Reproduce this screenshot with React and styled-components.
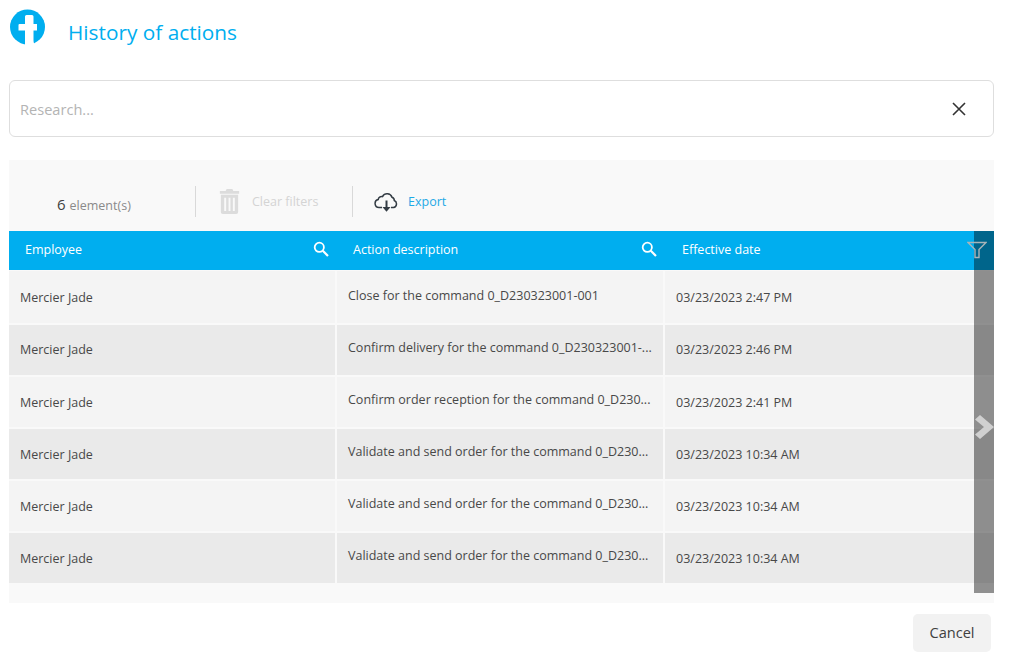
import React from "react";
import styled, { createGlobalStyle } from "styled-components";

const Global = createGlobalStyle`
  html, body { margin: 0; padding: 0; background: #fff; }
  body { font-family: "Open Sans", "Liberation Sans", sans-serif; color: #404040; }
`;

const Page = styled.div`
  width: 1013px;
  height: 658px;
  overflow: hidden;
  padding: 0 19px 0 9px;
  box-sizing: border-box;
`;
const Title = styled.header`
  height: 80px;
  display: flex;
  align-items: flex-start;
`;
const Logo = styled.svg`
  width: 36px;
  height: 36px;
  margin: 9px 0 0 1px;
  flex: none;
`;
const TitleText = styled.h1`
  margin: 18px 0 0 22px;
  font-size: 20.8px;
  line-height: 28px;
  font-weight: 400;
  color: #00aeef;
`;
const SearchBox = styled.div`
  height: 57px;
  box-sizing: border-box;
  border: 1px solid #dedede;
  border-radius: 6px;
  display: flex;
  align-items: center;
  justify-content: space-between;
  padding: 0 27px 0 10px;
  font-size: 14.6px;
  color: #b4b4b4;
`;
const Panel = styled.section`
  position: relative;
  margin-top: 23px;
  height: 443px;
  background: #f9f9f9;
`;
const Toolbar = styled.div`
  height: 71px;
  display: flex;
  align-items: flex-start;
`;
const Count = styled.div`
  width: 186px;
  box-sizing: border-box;
  padding: 34px 0 0 48px;
  font-size: 12.5px;
  line-height: 20px;
  color: #8a8a8a;
  span { font-size: 15px; color: #404040; margin-right: 4px; }
`;
const ToolAction = styled.div`
  margin-top: 26px;
  height: 31px;
  box-sizing: border-box;
  border-left: 1px solid #d9d9d9;
  display: flex;
  align-items: flex-start;
  width: ${p => p.$width}px;
  padding-left: ${p => p.$pad}px;
  gap: ${p => p.$gap}px;
  font-size: 12.5px;
  line-height: 18px;
  color: ${p => (p.$off ? "#d4d4d4" : "#1fa9e6")};
`;
const ToolIcon = styled.svg`
  margin-top: ${p => p.$top}px;
  flex: none;
`;
const ActionLabel = styled.span`
  margin-top: 7px;
`;
const Head = styled.div`
  height: 39px;
  background: #00aeef;
  display: grid;
  grid-template-columns: 328px 328px 1fr;
  color: #fff;
  font-size: 12.5px;
`;
const HeadCell = styled.div`
  display: flex;
  align-items: center;
  justify-content: space-between;
  padding: 0 ${p => p.$right}px 3px ${p => p.$left}px;
`;
const Rows = styled.div`
  padding-top: 1px;
  display: flex;
  flex-direction: column;
  gap: 2px;
`;
const Row = styled.div`
  height: ${p => (p.$first ? 52 : 50)}px;
  display: grid;
  grid-template-columns: 326px 326px 1fr;
  gap: 2px;
  font-size: 12.5px;
  color: #484848;
`;
const Cell = styled.div`
  background: ${p => (p.$even ? "#eaeaea" : "#f4f4f4")};
  padding: 0 11px ${p => p.$lift}px;
  display: flex;
  align-items: center;
  white-space: nowrap;
  box-sizing: border-box;
`;
const Overlay = styled.div`
  position: absolute;
  top: 71px;
  right: 0;
  width: 20px;
  height: 362px;
  padding-top: 30px;
  box-sizing: border-box;
  background: rgba(0, 0, 0, 0.42);
  display: flex;
  align-items: center;
  justify-content: flex-end;
`;
const Filter = styled.svg`
  position: absolute;
  top: 241px;
  left: 967px;
  width: 20px;
  height: 18px;
`;
const Footer = styled.footer`
  display: flex;
  justify-content: flex-end;
  padding: 11px 3px 0 0;
`;
const CancelButton = styled.button`
  width: 78px;
  height: 38px;
  padding: 0 0 2px;
  border: 0;
  border-radius: 5px;
  background: #f2f2f2;
  font: 400 14.6px "Open Sans", sans-serif;
  color: #404040;
`;

const rows = [
  { action: "Close for the command 0_D230323001-001", date: "03/23/2023 2:47 PM", side: 0, mid: 3 },
  { action: "Confirm delivery for the command 0_D230323001-...", date: "03/23/2023 2:46 PM", side: 2, mid: 5 },
  { action: "Confirm order reception for the command 0_D230...", date: "03/23/2023 2:41 PM", side: 0, mid: 5 },
  { action: "Validate and send order for the command 0_D230...", date: "03/23/2023 10:34 AM", side: 0, mid: 5 },
  { action: "Validate and send order for the command 0_D230...", date: "03/23/2023 10:34 AM", side: 0, mid: 5 },
  { action: "Validate and send order for the command 0_D230...", date: "03/23/2023 10:34 AM", side: 0, mid: 5 },
];

const Search = () => (
  <svg width="16" height="16" viewBox="0 0 16 16" fill="none" stroke="#fff" strokeWidth="1.8">
    <circle cx="6.3" cy="6.3" r="4.6" />
    <path d="M9.8 9.8 15 15" strokeWidth="2.2" />
  </svg>
);

export default function App() {
  return (
    <Page>
      <Global />
      <Title>
        <Logo viewBox="0 0 36 36">
          <circle cx="17.500" cy="18" r="17.500" fill="#00aeef" />
          <path
            fill="#fff"
            d="M15 7.500A1.500 1.500 0 0 1 16.500 6H22a1.500 1.500 0 0 1 1.500 1.500V15h3.500v6.500h-3.500V31c0 2.500.5 4 2 5.500H15V21.500H8.500V16A1 1 0 0 1 9.500 15H15Z"
          />
        </Logo>
        <TitleText>History of actions</TitleText>
      </Title>
      <SearchBox>
        <span>Research...</span>
        <svg width="14" height="14" viewBox="0 0 14 14" stroke="#333" strokeWidth="1.6">
          <path d="M1 1 13 13M13 1 1 13" />
        </svg>
      </SearchBox>
      <Panel>
        <Toolbar>
          <Count><span>6</span>element(s)</Count>
          <ToolAction $off $width={157} $pad={23} $gap={12}>
            <ToolIcon $top={3} width="21" height="25" viewBox="1 0 20 26" fill="#dcdcdc">
              <path d="M8 0h6l1 2h6v3H1V2h6z" />
              <path fillRule="evenodd" d="M2 6h18v18a2 2 0 0 1-2 2H4a2 2 0 0 1-2-2zm3.500 3v14h2V9zm4.500 0v14h2V9zm4.500 0v14h2V9z" />
            </ToolIcon>
            <ActionLabel>Clear filters</ActionLabel>
          </ToolAction>
          <ToolAction $width={150} $pad={21} $gap={9}>
            <ToolIcon $top={6} width="25" height="22" viewBox="0 0 25 22" fill="none" stroke="#333c44" strokeWidth="1.5">
              <path d="M8 15.500H5a4 4 0 0 1-.8-7.900 3.400 3.400 0 0 1 4.300-3 5.200 5.200 0 0 1 9.500.7 3.300 3.300 0 0 1 2.300 3.200 3.700 3.700 0 0 1-.8 7H17" />
              <path d="M12.500 8.500V16" strokeWidth="2" />
              <path d="M8.500 15h8l-4 4.800z" fill="#333c44" strokeWidth="0" />
            </ToolIcon>
            <ActionLabel>Export</ActionLabel>
          </ToolAction>
        </Toolbar>
        <Head>
          <HeadCell $left={16} $right={8}>Employee<Search /></HeadCell>
          <HeadCell $left={16} $right={8}>Action description<Search /></HeadCell>
          <HeadCell $left={17} $right={8}>Effective date</HeadCell>
        </Head>
        <Rows>
          {rows.map((r, i) => (
            <Row key={i} $first={i === 0}>
              <Cell $even={i % 2 === 1} $lift={r.side}>Mercier Jade</Cell>
              <Cell $even={i % 2 === 1} $lift={r.mid}>{r.action}</Cell>
              <Cell $even={i % 2 === 1} $lift={r.side}>{r.date}</Cell>
            </Row>
          ))}
        </Rows>
        <Overlay>
          <svg width="20" height="26" viewBox="0 0 20 26" fill="#d0d0d0">
            <path d="M1 5.500 6 1l14 12L6 25l-5-4.500L10 13z" />
          </svg>
        </Overlay>
      </Panel>
      <Footer>
        <CancelButton>Cancel</CancelButton>
      </Footer>
      <Filter viewBox="0 0 20 18" fill="none" stroke="#a9b4b8" strokeWidth="1.4">
        <path d="M1 1.500h18l-7 7v8H8v-8z" />
      </Filter>
    </Page>
  );
}
